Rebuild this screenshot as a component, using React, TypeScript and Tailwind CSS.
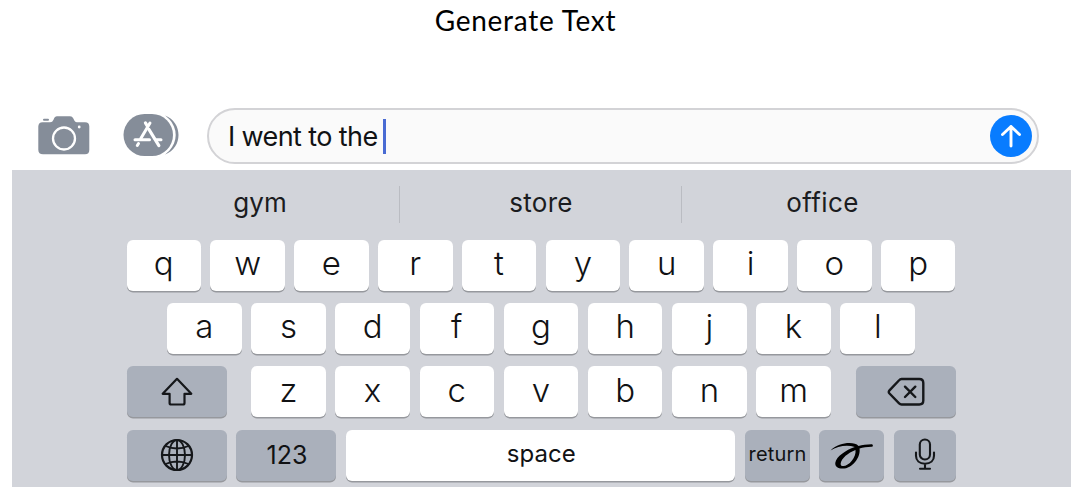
import type { ReactNode } from "react";

function Key({ children, className = "w-[74.6px] bg-white" }: { children?: ReactNode; className?: string }) {
  return (
    <button
      className={`flex h-[51px] shrink-0 items-center justify-center rounded-[6px] shadow-[0_1.5px_0_#96989d] ${className}`}
    >
      {children}
    </button>
  );
}

function Letters({ keys }: { keys: string }) {
  return (
    <>
      {keys.split("").map((letter) => (
        <Key key={letter}>
          <span className="relative top-[-1.5px] text-[33px] leading-none font-[340]">{letter}</span>
        </Key>
      ))}
    </>
  );
}

function CameraIcon() {
  return (
    <svg width="52" height="40" viewBox="0 0 52 40" fill="none">
      <rect x="5" y="2.700" width="6" height="2" rx="1" fill="#858d99" />
      <path
        d="M4.500 6.300H12c2 0 2.500-.8 3.500-2.500C16.500.9 17.500.2 19 .2h13c1.600 0 2.600.7 3.500 2.600 1 2.200 1.500 3.500 3.500 3.500h8c3 0 4.300 1.500 4.300 4.200v23.300c0 3-1.300 4.500-4.300 4.500H5c-3 0-4.700-1.500-4.700-4.500V10.500C.3 7.800 2 6.300 4.500 6.300Z"
        fill="#858d99"
      />
      <circle cx="26" cy="22.500" r="11" stroke="#fff" strokeWidth="2.300" />
      <circle cx="41.200" cy="11" r="1.400" fill="#fff" />
    </svg>
  );
}

function AppStoreIcon() {
  return (
    <svg width="57" height="42" viewBox="0 0 57 42" fill="none">
      <path d="M42 1.500C60 8 60 34 42 40.500C52 32 54 11 42 1.500Z" fill="#858d99" />
      <rect x="1.700" y="-1.500" width="51" height="45" rx="22.500" fill="#fff" />
      <rect x=".5" y="0" width="49.500" height="42" rx="21" fill="#858d99" />
      <g stroke="#fff" strokeLinecap="round">
        <path d="M27 9 17.800 24.500M15.500 29.500l-1.200 2" strokeWidth="3" />
        <path d="m22.500 9 1.800 3M26 15.500l9.800 16" strokeWidth="3.300" />
        <path d="M12 25.700h14.500M33.500 25.700H38" strokeWidth="3" />
      </g>
    </svg>
  );
}

function ShiftIcon() {
  return (
    <svg width="32" height="29" viewBox="0 0 32 29" fill="none" stroke="#15171a" strokeWidth="2.200" strokeLinejoin="round">
      <path d="M16 1.800 30.300 16.800H23.500V26c0 1-.6 1.500-1.500 1.500H10.200c-1 0-1.600-.5-1.600-1.500v-9.200H1.700Z" />
    </svg>
  );
}

function GlobeIcon() {
  return (
    <svg width="34" height="34" viewBox="0 0 34 34" fill="none" stroke="#15171a" strokeWidth="1.900">
      <circle cx="17" cy="17" r="15" strokeWidth="2.200" />
      <ellipse cx="17" cy="17" rx="8" ry="15" />
      <path d="M17 2v30M2 17h30M5.500 8q11.500 5 23 0M5.500 26q11.500-5 23 0" />
    </svg>
  );
}

function DeleteIcon() {
  return (
    <svg width="38" height="30" viewBox="0 0 38 30" fill="none" stroke="#15171a" strokeWidth="2.400" strokeLinecap="round" strokeLinejoin="round">
      <path d="M14.500 2h17.800c2.700 0 4 1.400 4 4v17.500c0 2.600-1.300 4-4 4H14.500c-1 0-1.700-.4-2.400-1.100L2.500 16.500c-1-1.100-1-2 0-3.100l9.600-10.200C12.800 2.400 13.500 2 14.500 2Z" />
      <path d="m18 9.700 10.300 10.300M28.300 9.700l-10.300 10.300" />
    </svg>
  );
}

function ScribbleIcon() {
  return (
    <svg className="mt-[2px]" width="44" height="28" viewBox="0 0 44 30" preserveAspectRatio="none" fill="none">
      <path
        d="M.5 9C6 3.300 13 1.200 19.500 1.200c4 0 7.200 1 9 3.100C32 3 37 2.500 41.500 2.300c1.800 0 1.900 2.700 0 2.900-4.500.1-8.500.5-12 1.700C31 16 22.500 28.500 12.500 28.500c-4.700 0-7.700-2.200-7.200-6.300C6.200 15.500 16 8.500 24.800 5.300 17 2.500 7.500 4.400.5 9ZM25.500 8.500C18 11.500 11.500 17.500 10.700 22.700c-.3 2 .7 3.100 2.500 3.100C18.800 25.800 26.500 16 25.500 8.500Z"
        fill="#000"
      />
    </svg>
  );
}

function MicIcon() {
  return (
    <svg width="22" height="34" viewBox="0 0 22 34" fill="none" stroke="#15171a" strokeWidth="2.100" strokeLinecap="round">
      <rect x="5.800" y="1.500" width="10.200" height="20" rx="5.100" />
      <path d="M2 14.500v3.200C2 22.500 5.500 25.700 11 25.700s9-3.200 9-8v-3.200M11 26v4.500M6 30.700h10" />
    </svg>
  );
}

export default function App() {
  return (
    <main className="flex h-[496px] w-[1084px] flex-col overflow-hidden bg-white font-['Inter',sans-serif] text-[#111214]">
      <h1 className="flex h-[40px] w-[1051px] shrink-0 items-center justify-center font-['Lato',sans-serif] text-[28px] tracking-[0.75px] text-black">
        Generate Text
      </h1>

      <div className="flex h-[130px] shrink-0 items-start pt-[68px] pl-[38px]">
        <div className="mt-[8px] shrink-0">
          <CameraIcon />
        </div>
        <div className="mt-[6px] ml-[33px] shrink-0">
          <AppStoreIcon />
        </div>
        <div className="ml-[27px] flex h-[56px] w-[832px] shrink-0 items-center rounded-full border-2 border-[#d3d3d6] bg-[#fafafa] pr-[5px] pl-[19px]">
          <span className="mt-[2px] text-[27px] tracking-[-0.61px] whitespace-pre">I went to the</span>
          <span className="ml-[5px] h-[35px] w-[3px] bg-[#496bd3]" />
          <button className="ml-auto flex size-[42px] items-center justify-center rounded-full bg-[#087cff]">
            <svg width="22" height="26" viewBox="0 0 22 26" fill="none" stroke="#fff" strokeWidth="2.900" strokeLinecap="round" strokeLinejoin="round">
              <path d="M11 23V3.500M2.500 11.500 11 3.500 19.500 11.500" />
            </svg>
          </button>
        </div>
      </div>

      <section className="ml-[12px] flex h-[317px] w-[1059px] shrink-0 flex-col bg-[#d2d4da]">
        <div className="ml-[106px] flex h-[69.500px] w-[846px] shrink-0 items-center pb-[4px] text-[26px] text-[#1b1c20]">
          <span className="w-[281px] pl-[3px] text-center">gym</span>
          <span className="mt-[4px] h-[37px] w-px bg-[#babcc2]" />
          <span className="w-[281px] pl-[1px] text-center tracking-[0.3px]">store</span>
          <span className="mt-[4px] h-[37px] w-px bg-[#babcc2]" />
          <span className="w-[281px] text-center tracking-[0.4px]">office</span>
        </div>

        <div className="ml-[114.500px] flex w-[829px] flex-col gap-[12.400px]">
          <div className="flex justify-between">
            <Letters keys="qwertyuiop" />
          </div>
          <div className="flex justify-center gap-[9.600px]">
            <Letters keys="asdfghjkl" />
          </div>
          <div className="flex justify-between">
            <Key className="w-[100px] bg-[#aab0bb]">
              <ShiftIcon />
            </Key>
            <div className="flex gap-[9.600px]">
              <Letters keys="zxcvbnm" />
            </div>
            <Key className="w-[100px] bg-[#aab0bb]">
              <DeleteIcon />
            </Key>
          </div>
          <div className="flex justify-between">
            <Key className="w-[100px] bg-[#aab0bb]">
              <GlobeIcon />
            </Key>
            <Key className="w-[100px] bg-[#aab0bb]">
              <span className="relative top-[1px] left-[1px] text-[25px]">123</span>
            </Key>
            <Key className="w-[389.500px] bg-white">
              <span className="relative top-[-1px] left-[1px] text-[24px]">space</span>
            </Key>
            <Key className="w-[65px] bg-[#aab0bb]">
              <span className="relative top-[-1px] left-[0.5px] text-[20px] tracking-[0.15px]">return</span>
            </Key>
            <Key className="w-[65px] bg-[#aab0bb]">
              <ScribbleIcon />
            </Key>
            <Key className="w-[62px] bg-[#aab0bb]">
              <MicIcon />
            </Key>
          </div>
        </div>
      </section>
    </main>
  );
}
